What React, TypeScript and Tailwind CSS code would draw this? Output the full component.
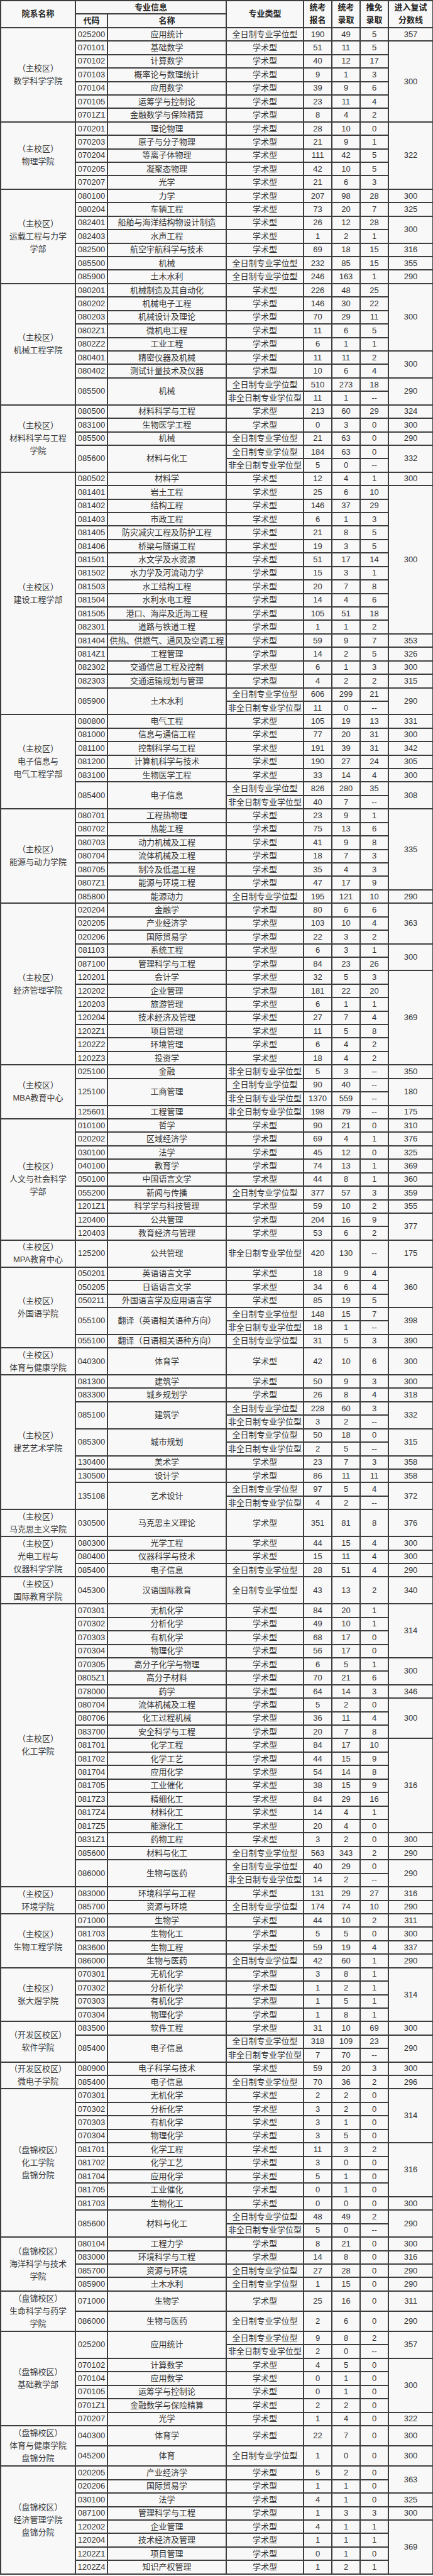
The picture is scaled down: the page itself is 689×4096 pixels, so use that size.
import React from "react";

type Line = [string, string, string, string];

interface Row {
  code: string;
  name: string;
  lines: Line[];
  cut?: string;
  span?: number;
  h?: "1.5" | "2";
}

interface Group {
  label: string[];
  rows: Row[];
}

const X = "学术型";
const F = "全日制专业学位型";
const P = "非全日制专业学位型";

function r(
  code: string,
  name: string,
  t: string,
  a: string,
  b: string,
  c: string,
  cut?: string,
  span?: number,
  h?: "1.5" | "2"
): Row {
  return { code, name, lines: [[t, a, b, c]], cut, span, h };
}

function d(code: string, name: string, l1: Line, l2: Line, cut: string): Row {
  return { code, name, lines: [l1, l2], cut, span: 2 };
}

const groups: Group[] = [
  {
    label: ["（主校区）", "数学科学学院"],
    rows: [
      r("025200", "应用统计", F, "190", "49", "5", "357"),
      r("070101", "基础数学", X, "51", "11", "5", "300", 6),
      r("070102", "计算数学", X, "40", "12", "17"),
      r("070103", "概率论与数理统计", X, "9", "1", "3"),
      r("070104", "应用数学", X, "39", "9", "6"),
      r("070105", "运筹学与控制论", X, "23", "11", "4"),
      r("0701Z1", "金融数学与保险精算", X, "8", "4", "2"),
    ],
  },
  {
    label: ["（主校区）", "物理学院"],
    rows: [
      r("070201", "理论物理", X, "28", "10", "0", "322", 5),
      r("070203", "原子与分子物理", X, "21", "9", "1"),
      r("070204", "等离子体物理", X, "111", "42", "5"),
      r("070205", "凝聚态物理", X, "42", "10", "5"),
      r("070207", "光学", X, "21", "6", "3"),
    ],
  },
  {
    label: ["（主校区）", "运载工程与力学", "学部"],
    rows: [
      r("080100", "力学", X, "207", "98", "28", "300"),
      r("080204", "车辆工程", X, "73", "20", "7", "325"),
      r("082401", "船舶与海洋结构物设计制造", X, "26", "12", "28", "300", 2),
      r("082403", "水声工程", X, "1", "2", "1"),
      r("082500", "航空宇航科学与技术", X, "69", "18", "15", "316"),
      r("085500", "机械", F, "232", "85", "15", "355"),
      r("085900", "土木水利", F, "246", "163", "1", "290"),
    ],
  },
  {
    label: ["（主校区）", "机械工程学院"],
    rows: [
      r("080201", "机械制造及其自动化", X, "226", "48", "25", "300", 5),
      r("080202", "机械电子工程", X, "146", "30", "22"),
      r("080203", "机械设计及理论", X, "70", "29", "11"),
      r("0802Z1", "微机电工程", X, "11", "6", "5"),
      r("0802Z2", "工业工程", X, "6", "1", "1"),
      r("080401", "精密仪器及机械", X, "11", "11", "2", "300", 2),
      r("080402", "测试计量技术及仪器", X, "10", "6", "4"),
      d("085500", "机械", [F, "510", "273", "18"], [P, "11", "1", "--"], "290"),
    ],
  },
  {
    label: ["（主校区）", "材料科学与工程", "学院"],
    rows: [
      r("080500", "材料科学与工程", X, "213", "60", "29", "324"),
      r("083100", "生物医学工程", X, "0", "3", "0", "300"),
      r("085500", "机械", F, "21", "63", "0", "290"),
      d("085600", "材料与化工", [F, "184", "63", "0"], [P, "5", "0", "--"], "332"),
    ],
  },
  {
    label: ["（主校区）", "建设工程学部"],
    rows: [
      r("080502", "材料学", X, "12", "4", "1", "300"),
      r("081401", "岩土工程", X, "25", "6", "10", "300", 11),
      r("081402", "结构工程", X, "146", "37", "29"),
      r("081403", "市政工程", X, "6", "1", "3"),
      r("081405", "防灾减灾工程及防护工程", X, "21", "8", "5"),
      r("081406", "桥梁与隧道工程", X, "19", "3", "5"),
      r("081501", "水文学及水资源", X, "51", "17", "14"),
      r("081502", "水力学及河流动力学", X, "15", "3", "1"),
      r("081503", "水工结构工程", X, "20", "7", "8"),
      r("081504", "水利水电工程", X, "14", "4", "6"),
      r("081505", "港口、海岸及近海工程", X, "105", "51", "18"),
      r("082301", "道路与铁道工程", X, "1", "1", "2"),
      r("081404", "供热、供燃气、通风及空调工程", X, "59", "9", "7", "353"),
      r("0814Z1", "工程管理", X, "14", "2", "5", "326"),
      r("082302", "交通信息工程及控制", X, "6", "1", "3", "300"),
      r("082303", "交通运输规划与管理", X, "4", "2", "2", "315"),
      d("085900", "土木水利", [F, "606", "299", "21"], [P, "11", "0", "--"], "290"),
    ],
  },
  {
    label: ["（主校区）", "电子信息与", "电气工程学部"],
    rows: [
      r("080800", "电气工程", X, "105", "19", "13", "331"),
      r("081000", "信息与通信工程", X, "77", "20", "31", "300"),
      r("081100", "控制科学与工程", X, "191", "39", "31", "342"),
      r("081200", "计算机科学与技术", X, "190", "27", "24", "305"),
      r("083100", "生物医学工程", X, "33", "14", "4", "300"),
      d("085400", "电子信息", [F, "826", "280", "35"], [P, "40", "7", "--"], "308"),
    ],
  },
  {
    label: ["（主校区）", "能源与动力学院"],
    rows: [
      r("080701", "工程热物理", X, "23", "9", "1", "335", 6),
      r("080702", "热能工程", X, "75", "13", "6"),
      r("080703", "动力机械及工程", X, "41", "9", "8"),
      r("080704", "流体机械及工程", X, "18", "7", "3"),
      r("080705", "制冷及低温工程", X, "35", "4", "3"),
      r("0807Z1", "能源与环境工程", X, "47", "17", "9"),
      r("085800", "能源动力", F, "195", "121", "10", "290"),
    ],
  },
  {
    label: ["（主校区）", "经济管理学院"],
    rows: [
      r("020204", "金融学", X, "80", "6", "6", "363", 3),
      r("020205", "产业经济学", X, "103", "10", "4"),
      r("020206", "国际贸易学", X, "22", "3", "2"),
      r("081103", "系统工程", X, "6", "3", "1", "300", 2),
      r("087100", "管理科学与工程", X, "84", "23", "26"),
      r("120201", "会计学", X, "32", "5", "3", "369", 7),
      r("120202", "企业管理", X, "181", "22", "20"),
      r("120203", "旅游管理", X, "6", "1", "1"),
      r("120204", "技术经济及管理", X, "27", "7", "4"),
      r("1202Z1", "项目管理", X, "11", "5", "8"),
      r("1202Z2", "环境管理", X, "6", "4", "2"),
      r("1202Z3", "投资学", X, "18", "4", "2"),
    ],
  },
  {
    label: ["（主校区）", "MBA教育中心"],
    rows: [
      r("025100", "金融", P, "5", "3", "--", "350"),
      d("125100", "工商管理", [F, "90", "40", "--"], [P, "1370", "559", "--"], "180"),
      r("125601", "工程管理", P, "198", "79", "--", "175"),
    ],
  },
  {
    label: ["（主校区）", "人文与社会科学", "学部"],
    rows: [
      r("010100", "哲学", X, "90", "21", "0", "310"),
      r("020202", "区域经济学", X, "69", "4", "1", "376"),
      r("030100", "法学", X, "45", "12", "0", "325"),
      r("040100", "教育学", X, "74", "13", "1", "369"),
      r("050100", "中国语言文学", X, "44", "8", "1", "360"),
      r("055200", "新闻与传播", F, "377", "57", "3", "359"),
      r("1201Z1", "科学学与科技管理", X, "59", "10", "2", "355"),
      r("120400", "公共管理", X, "204", "16", "9", "377", 2),
      r("120403", "教育经济与管理", X, "53", "6", "2"),
    ],
  },
  {
    label: ["（主校区）", "MPA教育中心"],
    rows: [r("125200", "公共管理", P, "420", "130", "--", "175", 1, "2")],
  },
  {
    label: ["（主校区）", "外国语学院"],
    rows: [
      r("050201", "英语语言文学", X, "18", "9", "4", "360", 3),
      r("050205", "日语语言文学", X, "34", "6", "4"),
      r("050211", "外国语言学及应用语言学", X, "85", "19", "5"),
      d("055100", "翻译（英语相关语种方向）", [F, "148", "15", "7"], [P, "18", "1", "--"], "398"),
      r("055100", "翻译（日语相关语种方向）", F, "31", "5", "3", "390"),
    ],
  },
  {
    label: ["（主校区）", "体育与健康学院"],
    rows: [r("040300", "体育学", X, "42", "10", "6", "300", 1, "2")],
  },
  {
    label: ["（主校区）", "建艺艺术学院"],
    rows: [
      r("081300", "建筑学", X, "50", "9", "3", "300"),
      r("083300", "城乡规划学", X, "26", "8", "4", "318"),
      d("085100", "建筑学", [F, "228", "60", "3"], [P, "3", "2", "--"], "332"),
      d("085300", "城市规划", [F, "50", "18", "0"], [P, "2", "5", "--"], "315"),
      r("130400", "美术学", X, "23", "7", "3", "358"),
      r("130500", "设计学", X, "86", "11", "11", "358"),
      d("135108", "艺术设计", [F, "97", "5", "4"], [P, "4", "2", "--"], "372"),
    ],
  },
  {
    label: ["（主校区）", "马克思主义学院"],
    rows: [r("030500", "马克思主义理论", X, "351", "81", "8", "376", 1, "2")],
  },
  {
    label: ["（主校区）", "光电工程与", "仪器科学学院"],
    rows: [
      r("080300", "光学工程", X, "44", "15", "4", "300"),
      r("080400", "仪器科学与技术", X, "15", "11", "4", "300"),
      r("085400", "电子信息", F, "28", "51", "4", "290"),
    ],
  },
  {
    label: ["（主校区）", "国际教育学院"],
    rows: [r("045300", "汉语国际教育", F, "43", "13", "2", "340", 1, "2")],
  },
  {
    label: ["（主校区）", "化工学院"],
    rows: [
      r("070301", "无机化学", X, "84", "20", "1", "314", 4),
      r("070302", "分析化学", X, "49", "10", "1"),
      r("070303", "有机化学", X, "68", "17", "0"),
      r("070304", "物理化学", X, "56", "17", "0"),
      r("070305", "高分子化学与物理", X, "6", "5", "1", "300", 2),
      r("0805Z1", "高分子材料", X, "70", "21", "6"),
      r("078000", "药学", X, "64", "14", "3", "346"),
      r("080704", "流体机械及工程", X, "5", "2", "0", "300", 3),
      r("080706", "化工过程机械", X, "36", "11", "4"),
      r("083700", "安全科学与工程", X, "20", "7", "8"),
      r("081701", "化学工程", X, "84", "17", "10", "316", 7),
      r("081702", "化学工艺", X, "44", "15", "9"),
      r("081704", "应用化学", X, "54", "14", "8"),
      r("081705", "工业催化", X, "38", "15", "9"),
      r("0817Z3", "精细化工", X, "84", "29", "16"),
      r("0817Z4", "材料化工", X, "14", "4", "1"),
      r("0817Z5", "能源化工", X, "20", "4", "0"),
      r("0831Z1", "药物工程", X, "3", "2", "0", "300"),
      r("085600", "材料与化工", F, "563", "343", "2", "290"),
      d("086000", "生物与医药", [F, "40", "29", "0"], [P, "14", "2", "--"], "290"),
    ],
  },
  {
    label: ["（主校区）", "环境学院"],
    rows: [
      r("083000", "环境科学与工程", X, "131", "29", "27", "316"),
      r("085700", "资源与环境", F, "174", "74", "10", "290"),
    ],
  },
  {
    label: ["（主校区）", "生物工程学院"],
    rows: [
      r("071000", "生物学", X, "44", "10", "2", "311"),
      r("081703", "生物化工", X, "5", "5", "0", "300"),
      r("083600", "生物工程", X, "59", "19", "4", "337"),
      r("086000", "生物与医药", F, "42", "60", "1", "290"),
    ],
  },
  {
    label: ["（主校区）", "张大煜学院"],
    rows: [
      r("070301", "无机化学", X, "3", "8", "1", "314", 4),
      r("070302", "分析化学", X, "1", "2", "1"),
      r("070303", "有机化学", X, "1", "5", "1"),
      r("070304", "物理化学", X, "1", "8", "1"),
    ],
  },
  {
    label: ["（开发区校区）", "软件学院"],
    rows: [
      r("083500", "软件工程", X, "31", "10", "69", "300"),
      d("085400", "电子信息", [F, "318", "109", "23"], [P, "7", "70", "--"], "290"),
    ],
  },
  {
    label: ["（开发区校区）", "微电子学院"],
    rows: [
      r("080900", "电子科学与技术", X, "59", "20", "3", "300"),
      r("085400", "电子信息", F, "70", "36", "2", "296"),
    ],
  },
  {
    label: ["（盘锦校区）", "化工学院", "盘锦分院"],
    rows: [
      r("070301", "无机化学", X, "2", "2", "0", "314", 4),
      r("070302", "分析化学", X, "3", "2", "0"),
      r("070303", "有机化学", X, "3", "1", "0"),
      r("070304", "物理化学", X, "3", "5", "0"),
      r("081701", "化学工程", X, "11", "3", "2", "316", 4),
      r("081702", "化学工艺", X, "3", "0", "0"),
      r("081704", "应用化学", X, "5", "1", "0"),
      r("081705", "工业催化", X, "0", "1", "0"),
      r("081703", "生物化工", X, "0", "0", "0", "300"),
      d("085600", "材料与化工", [F, "48", "49", "2"], [P, "5", "0", "--"], "290"),
    ],
  },
  {
    label: ["（盘锦校区）", "海洋科学与技术", "学院"],
    rows: [
      r("080104", "工程力学", X, "8", "21", "0", "300"),
      r("083000", "环境科学与工程", X, "14", "8", "0", "316"),
      r("085700", "资源与环境", F, "27", "28", "0", "290"),
      r("085900", "土木水利", F, "1", "15", "0", "290"),
    ],
  },
  {
    label: ["（盘锦校区）", "生命科学与药学", "学院"],
    rows: [
      r("071000", "生物学", X, "25", "16", "0", "311", 1, "1.5"),
      r("086000", "生物与医药", F, "2", "6", "0", "290", 1, "1.5"),
    ],
  },
  {
    label: ["（盘锦校区）", "基础教学部"],
    rows: [
      d("025200", "应用统计", [F, "9", "8", "2"], [P, "2", "0", "--"], "357"),
      r("070102", "计算数学", X, "4", "5", "0", "300", 4),
      r("070104", "应用数学", X, "0", "1", "0"),
      r("070105", "运筹学与控制论", X, "0", "1", "0"),
      r("0701Z1", "金融数学与保险精算", X, "2", "2", "0"),
      r("070207", "光学", X, "1", "4", "0", "322"),
    ],
  },
  {
    label: ["（盘锦校区）", "体育与健康学院", "盘锦分院"],
    rows: [
      r("040300", "体育学", X, "22", "7", "0", "300", 1, "1.5"),
      r("045200", "体育", F, "1", "0", "0", "300", 1, "1.5"),
    ],
  },
  {
    label: ["（盘锦校区）", "经济管理学院", "盘锦分院"],
    rows: [
      r("020205", "产业经济学", X, "5", "2", "0", "363", 2),
      r("020206", "国际贸易学", X, "1", "1", "0"),
      r("030100", "法学", X, "4", "1", "0", "325"),
      r("087100", "管理科学与工程", X, "1", "3", "3", "300"),
      r("120202", "企业管理", X, "4", "1", "1", "369", 4),
      r("120204", "技术经济及管理", X, "1", "1", "1"),
      r("1202Z1", "项目管理", X, "0", "1", "0"),
      r("1202Z4", "知识产权管理", X, "1", "2", "1"),
    ],
  },
];

const cell = "border-2 border-[#3d3d3d] p-0 text-center align-middle whitespace-nowrap";
const rowH = { "1": "h-[21.43px]", "1.5": "h-[32.15px]", "2": "h-[42.86px]" };

function GroupRows({ group }: { group: Group }) {
  const total = group.rows.reduce((n, row) => n + row.lines.length, 0);
  const out: React.ReactNode[] = [];

  group.rows.forEach((row, ri) => {
    row.lines.forEach((line, li) => {
      out.push(
        <tr key={`${ri}-${li}`} className={rowH[row.h ?? "1"]}>
          {ri === 0 && li === 0 && (
            <td rowSpan={total} className={cn(cell, "leading-[20px] text-[#3a3a3a]")}>
              {group.label.map((l) => (
                <div key={l}>{l}</div>
              ))}
            </td>
          )}
          {li === 0 && (
            <>
              <td rowSpan={row.lines.length} className={cell}>
                {row.code}
              </td>
              <td rowSpan={row.lines.length} className={cell}>
                {row.name}
              </td>
            </>
          )}
          <td className={cell}>{line[0]}</td>
          <td className={cell}>{line[1]}</td>
          <td className={cell}>{line[2]}</td>
          <td className={cell}>{line[3]}</td>
          {li === 0 && row.cut && (
            <td rowSpan={row.span ?? row.lines.length} className={cell}>
              {row.cut}
            </td>
          )}
        </tr>
      );
    });
  });

  return <>{out}</>;
}

function cn(...c: (string | false | undefined)[]) {
  return c.filter(Boolean).join(" ");
}

export default function App() {
  return (
    <div className="w-[689px] bg-[#f8f8f8] font-['Liberation_Sans','Noto_Sans_CJK_SC',sans-serif] text-[13px] leading-[16px] text-[#333]">
      <table className="w-[688px] table-fixed border-collapse bg-[#f8f8f8]">
        <colgroup>
          <col className="w-[119px]" />
          <col className="w-[51px]" />
          <col className="w-[189px]" />
          <col className="w-[123px]" />
          <col className="w-[45px]" />
          <col className="w-[45px]" />
          <col className="w-[45px]" />
          <col className="w-[71px]" />
        </colgroup>
        <thead className="font-bold text-[#222]">
          <tr className="h-[21.43px]">
            <th rowSpan={2} className={cell}>院系名称</th>
            <th colSpan={2} className={cell}>专业信息</th>
            <th rowSpan={2} className={cell}>专业类型</th>
            <th rowSpan={2} className={cn(cell, "leading-[20px]")}>
              <div>统考</div>
              <div>报名</div>
            </th>
            <th rowSpan={2} className={cn(cell, "leading-[20px]")}>
              <div>统考</div>
              <div>录取</div>
            </th>
            <th rowSpan={2} className={cn(cell, "leading-[20px]")}>
              <div>推免</div>
              <div>录取</div>
            </th>
            <th rowSpan={2} className={cn(cell, "leading-[20px]")}>
              <div>进入复试</div>
              <div>分数线</div>
            </th>
          </tr>
          <tr className="h-[21.43px]">
            <th className={cell}>代码</th>
            <th className={cell}>名称</th>
          </tr>
        </thead>
        <tbody>
          {groups.map((g, i) => (
            <GroupRows key={i} group={g} />
          ))}
        </tbody>
      </table>
    </div>
  );
}
